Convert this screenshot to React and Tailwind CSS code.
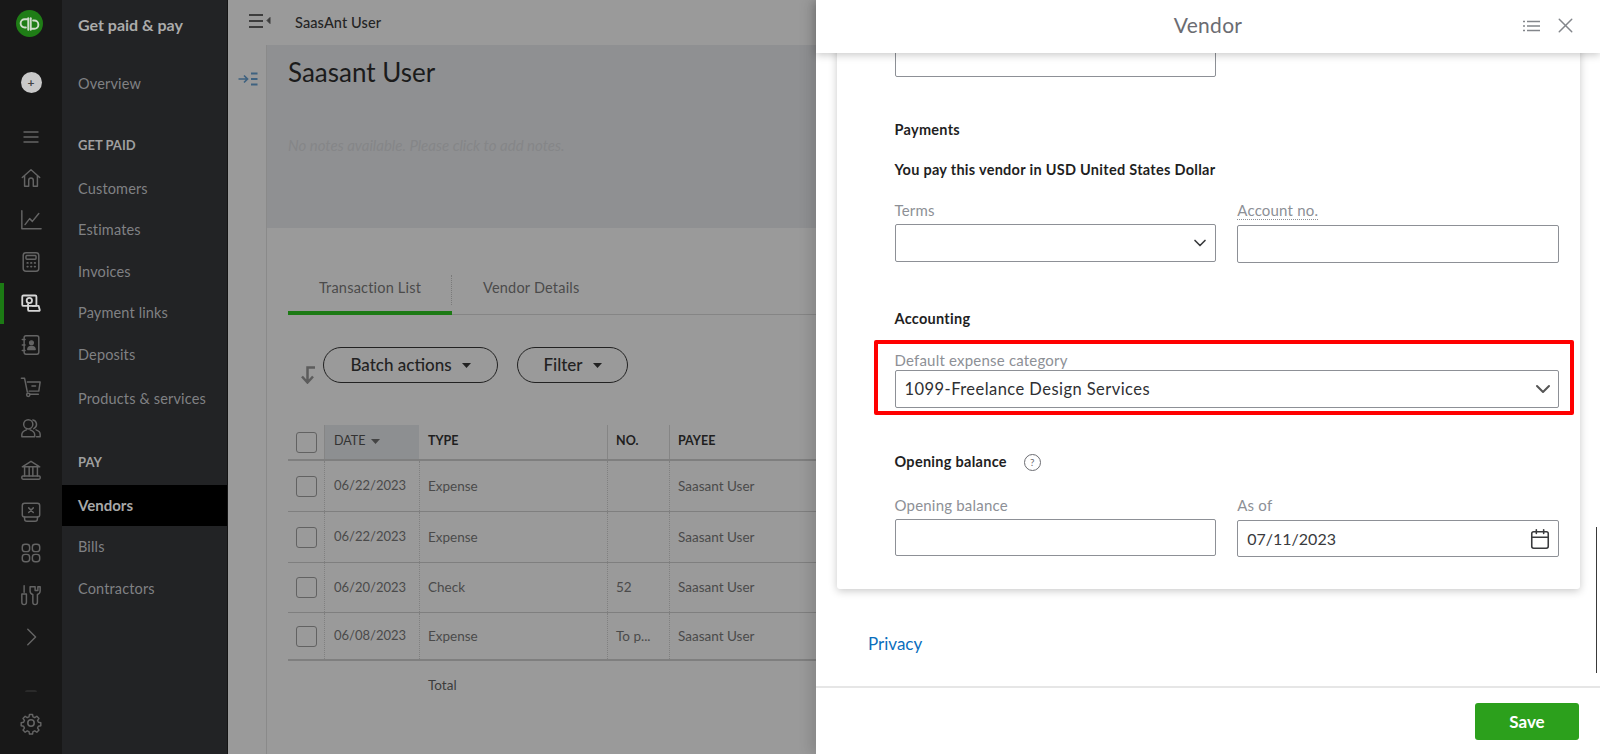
import React from "react";
import { ChevronDown, X, Calendar } from "lucide-react";

const S = ({ children, size = 22, sw = 1.6 }) => (
  <svg width={size} height={size} viewBox="0 0 24 24" fill="none" stroke="currentColor" strokeWidth={sw} strokeLinecap="round" strokeLinejoin="round">{children}</svg>
);

const railIcons = [
  <svg key="menu" width="16" height="12" viewBox="0 0 16 12" fill="none" stroke="currentColor" strokeWidth="1.300"><path d="M0.500 1h15M0.500 6h15M0.500 11h15" /></svg>,
  <S key="home"><path d="M2.500 11.500 12 3l9.500 8.500M5 9.500V21h4.500v-6.500a2.500 2.500 0 0 1 5 0V21H19V9.500" /></S>,
  <S key="chart"><path d="M2 2v19.500h21M5.500 17l5-6.500 3 3L20.500 5" /></S>,
  <S key="calc"><rect x="3.500" y="2" width="17" height="20" rx="3" /><rect x="6.500" y="5" width="11" height="4" rx="1" /><path d="M8 13h.5M12 13h.5M16 13h.5M8 17h.5M12 17h.5M16 17h.5" strokeWidth="2" /></S>,
  <S key="pay" size={20} sw={2.200}><rect x="1.500" y="3" width="17" height="12.500" rx="1.500" /><circle cx="10" cy="9" r="3.200" /><path d="M8.500 13.500V20a1.500 1.500 0 0 0 1.500 1.500h11.500a1 1 0 0 0 1-1.200l-1.300-4.800H14" /></S>,
  <S key="contact"><rect x="4.500" y="2" width="16" height="20" rx="2" /><path d="M2.500 6h3M2.500 12h3M2.500 18h3" /><circle cx="12.500" cy="9.500" r="2" fill="currentColor" /><path d="M8.500 17c0-2.500 1.500-3.500 4-3.500s4 1 4 3.500z" fill="currentColor" /></S>,
  <S key="cart"><path d="M1.500 2.500h3.500l3 15" /><circle cx="9" cy="20.500" r="1.800" /><path d="M11 20h9M8 6.500h14l-1.500 10H10" /><path d="M13 11h4" /></S>,
  <S key="people"><circle cx="9" cy="8" r="5" /><path d="M2 21.500v-2.500c0-3 2.500-4 5-5M11 14c2.500 1 5 2 5 5v2.500H2M14 3.200a5 5 0 0 1 1 9.500M17.500 14c2.500.8 4.500 2 4.500 5v2.500h-4" /></S>,
  <S key="bank"><path d="M2.500 8.500 12 2.500l9.500 6zM5 8.500v10M10 8.500v10M14 8.500v10M19 8.500v10" /><rect x="2" y="18.500" width="20" height="3.500" rx="1.200" /></S>,
  <S key="tax"><rect x="2.500" y="2.500" width="19" height="15" rx="2.500" /><path d="M5 17.500v2a2.500 2.500 0 0 0 2.500 2.500h9a2.500 2.500 0 0 0 2.500-2.500v-2M9.500 7.500l5 5M14.500 7.500l-5 5" /></S>,
  <S key="grid"><rect x="2.500" y="2.500" width="8" height="8" rx="3" /><rect x="13.500" y="2.500" width="8" height="8" rx="3" /><rect x="2.500" y="13.500" width="8" height="8" rx="3" /><rect x="13.500" y="13.500" width="8" height="8" rx="3" /></S>,
  <S key="tools"><path d="M6 2v7M3.500 11h5v9a2.500 2.500 0 0 1-5 0zM12.500 3v4.500a4 4 0 0 0 3 3.900V20a2.500 2.500 0 0 0 5 0v-8.600a4 4 0 0 0 3-3.900V3l-2.500 0v4h-3V3z" transform="translate(-1.500 0)" /></S>,
  <S key="chev"><path d="M8.500 3.500 17 12l-8.500 8.500" /></S>,
];

const Rail = () => (
  <div className="w-[62px] shrink-0 bg-[#181818] flex flex-col items-center text-[#646464]">
    <div className="mt-[10px] -ml-[3px] w-[27px] h-[27px] rounded-full bg-[#1f7d16] flex items-center justify-center">
      <svg width="21" height="14" viewBox="0 0 22 14" fill="none" stroke="#cfdccb" strokeWidth="2" strokeLinecap="round">
        <path d="M9.700 2H6a4.300 4.300 0 0 0 0 8.600h1.200" />
        <path d="M9.700 0.800V13" />
        <path d="M12.300 12h3.700a4.300 4.300 0 0 0 0-8.600h-1.200" />
        <path d="M12.300 1v12" />
      </svg>
    </div>
    <div className="mt-[35px] w-[21px] h-[21px] rounded-full bg-[#c9c9c9] flex items-center justify-center text-[#444] text-[12px] leading-none font-bold">+</div>
    <div className="mt-[23px] w-full">
      {railIcons.map((ic, i) => (
        <div key={i} className={`relative h-[41.67px] flex items-center justify-center ${i === 4 ? "text-[#d6d6d6]" : ""}`}>
          {i === 4 && <div className="absolute left-0 top-0 bottom-0 w-[4px] bg-[#1c7a14]" />}
          {ic}
        </div>
      ))}
    </div>
    <div className="mt-auto w-[12px] h-[2px] rounded-t bg-[#2a2a2a]" />
    <div className="mt-[19px] mb-[19px] h-[24px] flex items-center">
      <S size={24}>
        <circle cx="12" cy="12" r="3.200" />
        <path d="M10.300 2.500h3.400l.5 2.700 2 .9 2.300-1.600 2.400 2.400-1.600 2.300.9 2 2.700.5v3.400l-2.700.5-.9 2 1.600 2.300-2.400 2.400-2.300-1.600-2 .9-.5 2.700h-3.400l-.5-2.700-2-.9-2.300 1.600-2.400-2.400 1.600-2.300-.9-2-2.700-.5v-3.400l2.700-.5.9-2-1.600-2.300 2.400-2.400 2.300 1.600 2-.9z" transform="translate(1.200 1.200) scale(.9)" />
      </S>
    </div>
  </div>
);

const NavItem = ({ children, cls = "h-[41.5px]" }) => (
  <div className={`${cls} pl-[16px] flex items-center text-[14.500px] text-[#808184] tracking-[0.15px]`}>{children}</div>
);

const Sidebar = () => (
  <div className="w-[166px] shrink-0 bg-[#222325] border-r border-[#151515]">
    <div className="h-[50px] pl-[16px] flex items-center text-[16px] font-bold text-[#ababab]">Get paid &amp; pay</div>
    <NavItem cls="h-[42px] mt-[13px]">Overview</NavItem>
    <div className="h-[40px] mt-[21px] pl-[16px] flex items-center text-[13px] font-bold text-[#9f9f9f]">GET PAID</div>
    <div className="mt-[2px]">
      <NavItem>Customers</NavItem>
      <NavItem>Estimates</NavItem>
      <NavItem>Invoices</NavItem>
      <NavItem>Payment links</NavItem>
      <NavItem>Deposits</NavItem>
    </div>
    <NavItem cls="h-[42px] mt-[2.500px]">Products &amp; services</NavItem>
    <div className="h-[40px] mt-[23px] pl-[16px] flex items-center text-[13px] font-bold text-[#9f9f9f]">PAY</div>
    <div className="h-[41px] mt-[2px] pl-[16px] bg-black flex items-center text-[15px] font-bold text-[#a8a8a8]">Vendors</div>
    <NavItem cls="h-[42px]">Bills</NavItem>
    <NavItem cls="h-[42px]">Contractors</NavItem>
  </div>
);

const Check = () => <div className="w-[21px] h-[21px] rounded-[3px] border border-[#626262] ml-[8px]" />;

const rows = [
  { h: "h-[51px]", d: "06/22/2023", t: "Expense", n: "" },
  { h: "h-[51px]", d: "06/22/2023", t: "Expense", n: "" },
  { h: "h-[50px]", d: "06/20/2023", t: "Check", n: "52" },
  { h: "h-[48px]", d: "06/08/2023", t: "Expense", n: "To p..." },
];

const Table = () => (
  <div className="mt-[41px]">
    <div className="h-[36px] grid grid-cols-[36px_95px_188px_62px_1fr] items-stretch border-b-2 border-[#7f7f7f] text-[12.500px] font-bold text-[#1f1f1f]">
      <div className="flex items-center"><Check /></div>
      <div className="bg-[#8d8f91] border-l border-[#858585] pl-[9px] pb-[2px] flex items-center gap-[6px] font-normal text-[#333]">DATE
        <svg width="9" height="5" viewBox="0 0 9 5"><path d="M0 0h9L4.500 5z" fill="#444" /></svg>
      </div>
      <div className="pl-[9px] pb-[2px] flex items-center">TYPE</div>
      <div className="border-l border-[#858585] pl-[8px] pb-[2px] flex items-center">NO.</div>
      <div className="border-l border-[#858585] pl-[8px] pb-[2px] flex items-center">PAYEE</div>
    </div>
    {rows.map((r, i) => (
      <div key={i} className={`${r.h} grid grid-cols-[36px_95px_188px_62px_1fr] items-stretch ${i === 3 ? "border-b-2" : "border-b"} border-[#7f7f7f] text-[13.500px] text-[#4a4a4a]`}>
        <div className="flex items-center"><Check /></div>
        <div className="border-l border-dotted border-[#808080] pl-[9px] flex items-center text-[13px]">{r.d}</div>
        <div className="border-l border-dotted border-[#808080] pl-[8px] flex items-center">{r.t}</div>
        <div className="border-l border-dotted border-[#808080] pl-[8px] flex items-center">{r.n}</div>
        <div className="border-l border-dotted border-[#808080] pl-[8px] flex items-center">Saasant User</div>
      </div>
    ))}
    <div className="h-[48px] grid grid-cols-[36px_95px_188px_62px_1fr] text-[13.500px] text-[#3c3c3c]">
      <div /><div />
      <div className="pl-[9px] flex items-center">Total</div>
    </div>
  </div>
);

const Pill = ({ children, cls }) => (
  <div className={`${cls} h-[36px] rounded-full border-[1.750px] border-[#222] flex items-center justify-center gap-[10px] text-[17px] font-medium text-[#222]`}>
    {children}
    <svg width="9" height="5" viewBox="0 0 9 5"><path d="M0 0h9L4.500 5z" fill="#222" /></svg>
  </div>
);

const Main = () => (
  <div className="flex-1 min-w-0 bg-[#9a9a9a] flex flex-col">
    <div className="h-[45px] shrink-0 flex items-center">
      <svg className="ml-[20px] mr-[24px] mb-[4px]" width="23" height="16" viewBox="0 0 23 16" fill="none" stroke="#3d3d3d" strokeWidth="2"><path d="M1 2h14M1 8h14M1 14h14" /><path d="M22 4.500v6l-3-3z" fill="#3d3d3d" strokeWidth="1" /></svg>
      <span className="text-[14.500px] font-medium text-[#242424] tracking-[0.1px]">SaasAnt User</span>
    </div>
    <div className="flex-1 flex min-h-0">
      <div className="w-[39px] shrink-0 border-r border-[#8a8a8a] pt-[27px] pl-[10px]">
        <svg width="20" height="14" viewBox="0 0 20 14" fill="none" stroke="#3f6280" strokeWidth="1.700"><path d="M0.500 7h9M6 3.500 9.500 7 6 10.500" /><path d="M13 1.500h6.500M13 7h6.500M13 12.500h6.500" strokeWidth="2.200" /></svg>
      </div>
      <div className="flex-1 min-w-0 flex flex-col">
        <div className="h-[183px] bg-[#8f9092] pl-[21px]">
          <div className="pt-[9px] text-[26px] leading-[36px] text-[#1b1b1b]">Saasant User</div>
          <div className="mt-[44px] text-[15px] italic text-[#858688]">No notes available. Please click to add notes.</div>
        </div>
        <div className="pl-[21px] flex-1">
          <div className="mt-[40px] h-[47px] flex border-b border-[#858585] text-[14.500px] text-[#4b4b4b]">
            <div className="w-[164px] h-[47px] border-b-4 border-[#1c7a14] flex justify-center items-start pt-[9px] relative">
              <span className="tracking-[0.2px]">Transaction List</span>
              <div className="absolute right-0 top-[7px] h-[30px] border-r border-dotted border-[#7a7a7a]" />
            </div>
            <div className="pl-[31px] pt-[9px] tracking-[0.2px]">Vendor Details</div>
          </div>
          <div className="mt-[32px] flex items-start">
            <svg className="ml-[12px] mt-[19px]" width="16" height="18" viewBox="0 0 16 18" fill="none" stroke="#5c5c5c" strokeWidth="2.500"><path d="M15 1.500H7.500v14M2 10.500l5.500 6 5.500-6" /></svg>
            <Pill cls="ml-[7px] w-[175px]">Batch actions</Pill>
            <Pill cls="ml-[19px] w-[111px]">Filter</Pill>
          </div>
          <Table />
        </div>
      </div>
    </div>
  </div>
);

const Label = ({ children, cls = "" }) => (
  <div className={`h-[18px] leading-[18px] text-[15px] tracking-[0.2px] text-[#8d9096] ${cls}`}>{children}</div>
);
const Field = ({ children, cls = "h-[38px]" }) => (
  <div className={`${cls} border border-[#8d9096] rounded-[2px] bg-white flex items-center justify-between px-[9px] text-[16px] text-[#393a3d]`}>{children}</div>
);
const Heading = ({ children, cls = "" }) => (
  <div className={`h-[18px] leading-[18px] text-[14.500px] tracking-[0.28px] font-bold text-[#1f1f1f] ${cls}`}>{children}</div>
);

const Panel = () => (
  <div className="w-[784px] shrink-0 bg-white flex flex-col shadow-[-6px_0_12px_rgba(0,0,0,0.12)] relative">
    <div className="h-[53px] shrink-0 relative z-10 bg-white shadow-[0_2px_8px_rgba(0,0,0,0.22)] flex items-center justify-center pb-[3px]">
      <span className="text-[21px] text-[#6b6c72] tracking-[0.3px]">Vendor</span>
      <div className="absolute right-[22px] top-[13px] flex items-center gap-[13px] text-[#83868b]">
        <svg width="17" height="12" viewBox="0 0 17 12" fill="none" stroke="currentColor" strokeWidth="1.300"><path d="M4 1.500h13M4 6h13M4 10.500h13M0 1.500h2M0 6h2M0 10.500h2" /></svg>
        <X size={25} strokeWidth={1.400} />
      </div>
    </div>
    <div className="flex-1 min-h-0 overflow-hidden relative">
      <div className="ml-[21px] mr-[20px] bg-white shadow-[0_2px_8px_rgba(0,0,0,0.22)] rounded-b-[3px] pl-[57.500px] pr-[21px] h-[550px]">
        <div className="grid grid-cols-2 gap-x-[21px] -mt-[14px]">
          <Field />
        </div>
        <Heading cls="mt-[44px]">Payments</Heading>
        <Heading cls="mt-[22px]">You pay this vendor in USD United States Dollar</Heading>
        <div className="grid grid-cols-2 gap-x-[21px] mt-[22px]">
          <div>
            <Label>Terms</Label>
            <Field cls="h-[38px] mt-[5px]"><span /><ChevronDown size={20} strokeWidth={2} className="text-[#393a3d] -mr-[4px]" /></Field>
          </div>
          <div>
            <Label><span className="border-b border-dotted border-[#8d9096] inline-block leading-[17px]">Account no.</span></Label>
            <Field cls="h-[38px] mt-[6px]" />
          </div>
        </div>
        <Heading cls="mt-[47px]">Accounting</Heading>
        <div className="relative mt-[23px]">
          <Label>Default expense category</Label>
          <Field cls="h-[38px] mt-[1px]"><span className="text-[16.500px] tracking-[0.45px] text-[#2f3033]">1099-Freelance Design Services</span><ChevronDown size={24} strokeWidth={2} className="text-[#555] -mr-[6px]" /></Field>
          <div className="absolute -left-[21px] -right-[15px] -top-[11px] -bottom-[7px] border-4 border-[#ff0000] rounded-[2px]" />
        </div>
        <div className="flex items-center gap-[17px] mt-[45px]">
          <Heading>Opening balance</Heading>
          <div className="w-[17px] h-[17px] rounded-full border-[1.500px] border-[#6b6c72] text-[10px] leading-none text-[#6b6c72] flex items-center justify-center">?</div>
        </div>
        <div className="grid grid-cols-2 gap-x-[21px] mt-[25px]">
          <div>
            <Label>Opening balance</Label>
            <Field cls="h-[37px] mt-[5px]" />
          </div>
          <div>
            <Label>As of</Label>
            <Field cls="h-[37px] mt-[6px]"><span>07/11/2023</span><Calendar size={22} strokeWidth={1.700} className="text-[#393a3d] -mr-[2px]" /></Field>
          </div>
        </div>
      </div>
      <div className="ml-[52px] mt-[42px] text-[17px] text-[#0a6ebd]">Privacy</div>
      <div className="absolute right-[3px] top-[474px] w-[1px] h-[146px] bg-[#3a3a3a]" />
    </div>
    <div className="h-[68px] shrink-0 border-t-2 border-[#e6e6e6] flex justify-end pt-[15px] pr-[21px]">
      <div className="w-[104px] h-[37px] rounded-[3px] bg-[#2ca01c] text-white text-[17px] font-bold flex items-center justify-center">Save</div>
    </div>
  </div>
);

export default function App() {
  return (
    <div className="w-[1600px] h-[754px] overflow-hidden flex" style={{ fontFamily: "Lato, 'Open Sans', sans-serif" }}>
      <Rail />
      <Sidebar />
      <Main />
      <Panel />
    </div>
  );
}
